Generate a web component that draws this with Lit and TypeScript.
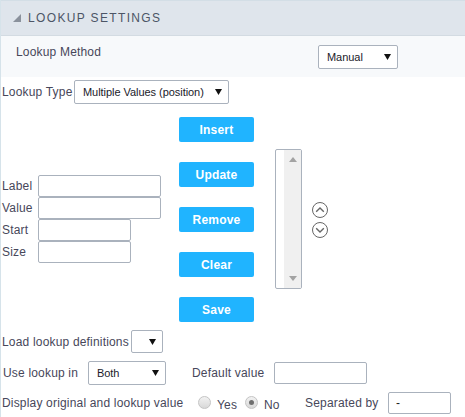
import { LitElement, css, html } from 'lit';
import { customElement } from 'lit/decorators.js';

const caret = html`<svg class="caret" width="7" height="6" viewBox="0 0 7 6"><path d="M0 0h7L3.5 6z" fill="#111"></path></svg>`;

@customElement('app-root')
export class AppRoot extends LitElement {
  static styles = css`
    :host {
      display: block;
      width: 465px;
      height: 417px;
      overflow: hidden;
      background: #fff;
      color: #47475a;
      font: 12px / 14px 'Liberation Sans', Arial, sans-serif;
      letter-spacing: 0.18px;
      box-sizing: border-box;
      border-left: 1px solid #d6e3ea;
    }

    .head {
      height: 36px;
      box-sizing: border-box;
      background: #dfe5ec;
      border-top: 1px solid #d3dee6;
      border-bottom: 1px solid #d3dbe2;
      display: flex;
      align-items: center;
      padding-left: 12px;
      gap: 7px;
      font-size: 12px;
      letter-spacing: 1.35px;
      color: #4c5566;
    }

    .method {
      height: 41px;
      box-sizing: border-box;
      background: #f7f9fb;
      display: flex;
      align-items: flex-start;
      padding: 9px 0 0 15px;
    }

    .method span {
      width: 302px;
    }

    .select {
      box-sizing: border-box;
      height: 24px;
      background: #fff;
      border: 1px solid #aab2bd;
      border-radius: 2px;
      display: flex;
      align-items: center;
      justify-content: space-between;
      padding: 0 6px 0 8px;
      color: #1a1a2a;
      font-size: 11px;
      letter-spacing: -0.05px;
    }

    .select.manual {
      width: 80px;
    }

    .row {
      display: flex;
      align-items: center;
    }

    .type {
      margin-top: 3px;
      padding-left: 1px;
    }

    .type > span {
      width: 72px;
    }

    .type .select {
      width: 155px;
    }

    .mid {
      display: flex;
      align-items: flex-start;
      height: 218px;
    }

    .fields {
      width: 178px;
      padding: 71px 0 0 1px;
      box-sizing: border-box;
    }

    .field {
      display: flex;
      align-items: center;
      height: 22px;
    }

    .field label {
      width: 36px;
    }

    input {
      box-sizing: border-box;
      height: 22px;
      background: #fff;
      border: 1px solid #aab2bd;
      border-radius: 2px;
      margin: 0;
      padding: 0 7px;
      font: 12px 'Liberation Sans', Arial, sans-serif;
      color: #222;
    }

    .wide {
      width: 123px;
    }

    .narrow {
      width: 93px;
    }

    .buttons {
      display: flex;
      flex-direction: column;
      gap: 20px;
      padding-top: 13px;
      width: 96px;
    }

    .btn {
      width: 75px;
      height: 25px;
      background: #20b4ff;
      border-radius: 2px;
      color: #fff;
      font-weight: 700;
      display: flex;
      align-items: center;
      justify-content: center;
      letter-spacing: 0.2px;
    }

    .list {
      box-sizing: border-box;
      width: 27px;
      height: 140px;
      margin-top: 45px;
      border: 1px solid #aab2bd;
      border-radius: 2px;
      background: #fff;
      display: flex;
      justify-content: flex-end;
    }

    .scroll {
      width: 17px;
      background: #f0f0f0;
      display: flex;
      flex-direction: column;
      justify-content: space-between;
      align-items: center;
      padding: 7px 0;
      box-sizing: border-box;
    }

    .arrows {
      display: flex;
      flex-direction: column;
      gap: 4px;
      margin: 98px 0 0 10px;
    }

    .arrows svg {
      display: block;
    }

    .load {
      margin-top: 8px;
      padding-left: 1px;
    }

    .load > span {
      width: 129px;
    }

    .load .select {
      width: 32px;
      height: 23px;
      justify-content: flex-end;
    }

    .use {
      margin-top: 8px;
      padding-left: 2px;
    }

    .use > .name {
      width: 85px;
    }

    .use .select {
      width: 78px;
    }

    .use > .dv {
      margin-left: 26px;
      width: 82px;
    }

    .use input {
      width: 93px;
    }

    .display {
      margin-top: 7px;
      padding-left: 1px;
    }

    .display > .name {
      width: 196px;
    }

    .radio {
      box-sizing: border-box;
      width: 13px;
      height: 13px;
      border-radius: 50%;
      border: 1px solid #c4c4c4;
      background: linear-gradient(#f2f2f2, #d8d8d8);
      display: flex;
      align-items: center;
      justify-content: center;
      margin-top: -2px;
    }

    .radio i {
      width: 5px;
      height: 5px;
      border-radius: 50%;
      background: #6f6f6f;
    }

    .opt {
      margin: 3px 0 0 6px;
    }

    .yes {
      width: 28px;
    }

    .no {
      width: 16px;
    }

    .sep {
      margin-left: 25px;
      width: 83px;
    }

    .display input {
      width: 63px;
    }
  `;

  render() {
    return html`
      <div class="head">
        <svg width="8" height="8" viewBox="0 0 8 8"><path d="M8 0v8H0z" fill="#8a919c"></path></svg>
        <span>LOOKUP SETTINGS</span>
      </div>
      <div class="method">
        <span>Lookup Method</span>
        <div class="select manual">Manual ${caret}</div>
      </div>
      <div class="row type">
        <span>Lookup Type</span>
        <div class="select">Multiple Values (position) ${caret}</div>
      </div>
      <div class="mid">
        <div class="fields">
          <div class="field"><label>Label</label><input class="wide" /></div>
          <div class="field"><label>Value</label><input class="wide" /></div>
          <div class="field"><label>Start</label><input class="narrow" /></div>
          <div class="field"><label>Size</label><input class="narrow" /></div>
        </div>
        <div class="buttons">
          ${['Insert', 'Update', 'Remove', 'Clear', 'Save'].map((b) => html`<div class="btn">${b}</div>`)}
        </div>
        <div class="list">
          <div class="scroll">
            <svg width="8" height="5" viewBox="0 0 8 5"><path d="M4 0l4 5H0z" fill="#a3a3a3"></path></svg>
            <svg width="8" height="5" viewBox="0 0 8 5"><path d="M0 0h8L4 5z" fill="#a3a3a3"></path></svg>
          </div>
        </div>
        <div class="arrows">
          <svg width="16" height="16" viewBox="0 0 16 16" fill="none" stroke="#666"><circle cx="8" cy="8" r="7.5"></circle><path d="M4.2 9.8 8 6l3.8 3.8" stroke-width="1.4"></path></svg>
          <svg width="16" height="16" viewBox="0 0 16 16" fill="none" stroke="#666"><circle cx="8" cy="8" r="7.5"></circle><path d="M4.2 6.2 8 10l3.8-3.8" stroke-width="1.4"></path></svg>
        </div>
      </div>
      <div class="row load">
        <span>Load lookup definitions</span>
        <div class="select">${caret}</div>
      </div>
      <div class="row use">
        <span class="name">Use lookup in</span>
        <div class="select">Both ${caret}</div>
        <span class="dv">Default value</span>
        <input />
      </div>
      <div class="row display">
        <span class="name">Display original and lookup value</span>
        <span class="radio"></span><span class="opt yes">Yes</span>
        <span class="radio"><i></i></span><span class="opt no">No</span>
        <span class="sep">Separated by</span>
        <input value="-" />
      </div>
    `;
  }
}

declare global {
  interface HTMLElementTagNameMap {
    'app-root': AppRoot;
  }
}
